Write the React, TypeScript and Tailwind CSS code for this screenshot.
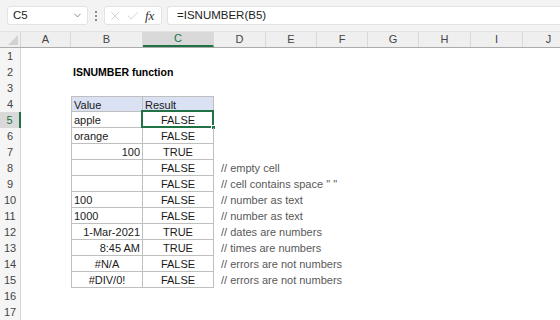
import { X, Check, ChevronDown } from 'lucide-react';

type Align = 'l' | 'r' | 'c';
type Row = { n: number; b?: string; ba?: Align; c?: string; d?: string; head?: boolean; title?: boolean };

const rows: Row[] = [
  { n: 1 },
  { n: 2, title: true },
  { n: 3 },
  { n: 4, head: true, b: 'Value', ba: 'l', c: 'Result' },
  { n: 5, b: 'apple', ba: 'l', c: 'FALSE' },
  { n: 6, b: 'orange', ba: 'l', c: 'FALSE' },
  { n: 7, b: '100', ba: 'r', c: 'TRUE' },
  { n: 8, b: '', c: 'FALSE', d: '// empty cell' },
  { n: 9, b: '', c: 'FALSE', d: '// cell contains space " "' },
  { n: 10, b: '100', ba: 'l', c: 'FALSE', d: '// number as text' },
  { n: 11, b: '1000', ba: 'l', c: 'FALSE', d: '// number as text' },
  { n: 12, b: '1-Mar-2021', ba: 'r', c: 'TRUE', d: '// dates are numbers' },
  { n: 13, b: '8:45 AM', ba: 'r', c: 'TRUE', d: '// times are numbers' },
  { n: 14, b: '#N/A', ba: 'c', c: 'FALSE', d: '// errors are not numbers' },
  { n: 15, b: '#DIV/0!', ba: 'c', c: 'FALSE', d: '// errors are not numbers' },
  { n: 16 },
  { n: 17 },
];

const cols = [
  { l: 'A', w: 'w-[50px]' },
  { l: 'B', w: 'w-[72px]' },
  { l: 'C', w: 'w-[71px]' },
  { l: 'D', w: 'w-[52px]' },
  { l: 'E', w: 'w-[51px]' },
  { l: 'F', w: 'w-[51px]' },
  { l: 'G', w: 'w-[51px]' },
  { l: 'H', w: 'w-[52px]' },
  { l: 'I', w: 'w-[52px]' },
  { l: 'J', w: 'w-[52px]' },
];

export default function App() {
  return (
    <div className="w-[560px] h-[320px] overflow-hidden bg-white font-['Liberation_Sans',Arial,sans-serif] text-[11px] text-[#1a1a1a]">
      {/* Formula toolbar */}
      <div className="h-[32px] bg-[#f3f3f3] border-b border-[#e2e2e2] flex items-start pt-[6px]">
        <div className="ml-[7px] w-[81px] h-[19px] bg-white border border-[#e3e3e3] rounded-[3px] flex items-center pl-[5px] pr-[4px]">
          <span className="flex-1 text-[11.5px] text-[#222]">C5</span>
          <ChevronDown size={11} strokeWidth={1.5} className="text-[#555]" />
        </div>
        <div className="w-[16px] h-[19px] flex flex-col items-center justify-center gap-[2px]">
          <span className="w-[2px] h-[2px] bg-[#888]" />
          <span className="w-[2px] h-[2px] bg-[#888]" />
          <span className="w-[2px] h-[2px] bg-[#888]" />
        </div>
        <div className="w-[58px] h-[19px] bg-white border border-[#e3e3e3] rounded-[3px] flex items-center pl-[3px] gap-[4px]">
          <X size={14} strokeWidth={1} className="text-[#b5b5b5]" />
          <Check size={14} strokeWidth={1} className="text-[#b5b5b5]" />
          <span className="font-['Liberation_Serif',serif] italic text-[13px] text-[#333] ml-[1px]">fx</span>
        </div>
        <div className="ml-[5px] flex-1 h-[19px] bg-white border-y border-l border-[#e3e3e3] rounded-l-[3px] flex items-center pl-[9px]">
          <span className="text-[11.5px] text-[#222]">=ISNUMBER(B5)</span>
        </div>
      </div>

      {/* Column headers */}
      <div className="h-[16px] flex overflow-hidden bg-[#efefef] border-b border-[#ababab] text-[#444]">
        <div className="w-[21px] shrink-0 border-r border-[#d6d6d6] relative overflow-hidden">
          <div className="absolute right-[2px] bottom-[2px] w-0 h-0 border-l-[10px] border-l-transparent border-b-[10px] border-b-[#d2d2d2]" />
        </div>
        {cols.map((c) => (
          <div
            key={c.l}
            className={`${c.w} shrink-0 flex items-center justify-center border-r border-[#dadada] ${
              c.l === 'C' ? 'bg-[#d9d9d9] border-b-2 border-b-[#217346] text-[#217346]' : ''
            }`}
          >
            {c.l}
          </div>
        ))}
      </div>

      {/* Rows */}
      {rows.map((r) => {
        const inTable = r.n >= 4 && r.n <= 15;
        const sel = r.n === 5;
        const bAlign = r.ba === 'r' ? 'justify-end pr-[2px]' : r.ba === 'c' ? 'justify-center' : 'justify-start pl-[2px]';
        return (
          <div key={r.n} className="h-[16px] flex leading-[16px]">
            <div
              className={`w-[21px] shrink-0 flex items-center justify-center text-[#444] ${
                sel ? 'bg-[#d9d9d9] border-r-2 border-[#217346] text-[#217346]' : 'bg-[#f5f5f5] border-r border-[#d6d6d6]'
              }`}
            >
              {r.n}
            </div>
            <div className="w-[50px] shrink-0" />
            {r.title && (
              <div className="whitespace-nowrap font-bold pl-[2px] text-[10.5px] text-black">ISNUMBER function</div>
            )}
            {inTable && (
              <>
                <div
                  className={`w-[72px] shrink-0 flex border-l border-r border-b border-[#bfbfbf] ${bAlign} ${
                    r.head ? 'bg-[#d9e1f2] border-t h-[16px]' : ''
                  }`}
                >
                  {r.b}
                </div>
                <div
                  className={`w-[71px] shrink-0 relative flex border-r border-b border-[#bfbfbf] ${
                    r.head ? 'bg-[#d9e1f2] border-t justify-start pl-[2px]' : 'justify-center'
                  }`}
                >
                  {r.c}
                  {sel && (
                    <div className="absolute left-[-2px] top-[-2px] right-[-1px] bottom-[-1px] border-2 border-[#217346]">
                      <div className="absolute right-[-4px] bottom-[-4px] w-[5px] h-[5px] bg-[#217346] border border-white" />
                    </div>
                  )}
                </div>
                {r.d && <div className="pl-[7px] whitespace-nowrap text-[#595959]">{r.d}</div>}
              </>
            )}
          </div>
        );
      })}
    </div>
  );
}
